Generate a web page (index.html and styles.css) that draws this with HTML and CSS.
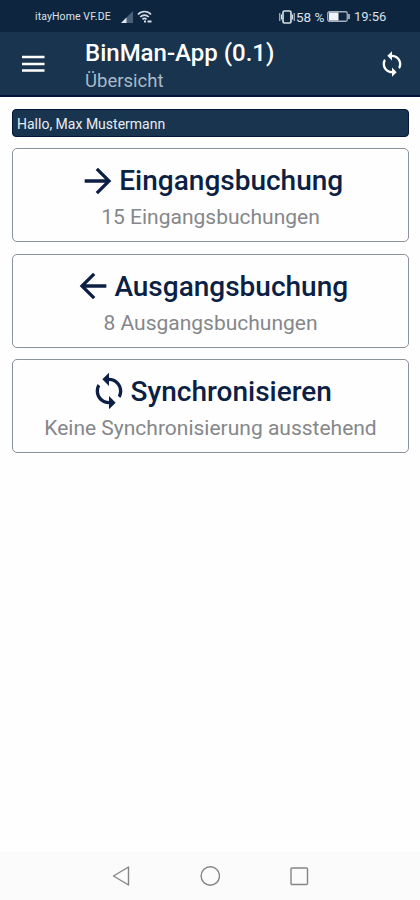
FILE: index.html
```html
<!DOCTYPE html>
<html lang="de">
<head>
    <meta charset="utf-8">
    <meta name="viewport" content="width=device-width">
    <title>BinMan-App</title>
    <link rel="stylesheet" href="styles.css">
</head>
<body>
<div class="statusbar">
    <div class="status-left">
        <span class="carrier">itayHome VF.DE</span>
        <svg class="signal" width="14" height="12" viewBox="0 0 14 12">
            <path d="M13 0v12H1z" fill="#4a6078"/>
            <path d="M6.500 6.500V12H1z" fill="#dfe6ee"/>
        </svg>
        <svg class="wifi" width="15" height="14" viewBox="0 0 15 14" fill="none" stroke="#d5dde6" stroke-width="1.700">
            <path d="M1 4.500C4.500.500 10.500.500 14 4.500M3.300 7c2.400-2.600 6-2.600 8.400 0M5.500 9.300c1.300-1.300 2.700-1.300 4 0"/>
            <path d="M7 11.500h2M10.500 11.500h4" stroke-width="2"/>
        </svg>
    </div>
    <div class="status-right">
        <svg width="16" height="14" viewBox="0 0 16 14" fill="none" stroke="#d5dde6" stroke-width="1.700">
            <rect x="4" y="1" width="8" height="12" rx="1.500"/>
            <path d="M.800 3v8M2.500 4.500v5M15.200 3v8M13.500 4.500v5" stroke-width="1"/>
        </svg>
        <span class="percent">58 %</span>
        <svg class="battery" width="23" height="11" viewBox="0 0 23 11">
            <rect x=".75" y=".75" width="19.500" height="9.500" rx="1.500" fill="none" stroke="#a3b0bd" stroke-width="1.300"/>
            <rect x="2" y="1.500" width="9.500" height="8" fill="#f0f4f8"/>
            <path d="M22 3v5" stroke="#c4cdd6" stroke-width="1.500"/>
        </svg>
        <span class="clock">19:56</span>
    </div>
</div>

<header>
    <svg class="menu" width="24" height="18" viewBox="0 0 24 18">
        <path d="M1 2h22.500M1 9h22.500M1 15.500h22.500" stroke="#fff" stroke-width="2.400"/>
    </svg>
    <div class="titles">
        <h1>BinMan-App (0.1)</h1>
        <p>Übersicht</p>
    </div>
    <svg class="sync" width="28" height="28" viewBox="0 0 24 24">
        <path fill="#fff" d="M12 4V1L8 5l4 4V6c3.310 0 6 2.690 6 6 0 1.010-.25 1.970-.7 2.800l1.460 1.460C19.540 15.030 20 13.570 20 12c0-4.420-3.580-8-8-8zm0 14c-3.310 0-6-2.690-6-6 0-1.010.25-1.970.7-2.800L5.240 7.740C4.460 8.970 4 10.430 4 12c0 4.420 3.580 8 8 8v3l4-4-4-4v3z"/>
    </svg>
</header>

<main>
    <div class="greeting">Hallo, Max Mustermann</div>

    <div class="card">
        <h2>
            <svg class="icon" viewBox="0 0 24 24"><path d="M12 4l-1.410 1.410L16.170 11H4v2h12.170l-5.580 5.590L12 20l8-8z"/></svg>
            <span>Eingangsbuchung</span>
        </h2>
        <p>15 Eingangsbuchungen</p>
    </div>

    <div class="card">
        <h2>
            <svg class="icon" viewBox="0 0 24 24"><path d="M20 11H7.830l5.590-5.590L12 4l-8 8 8 8 1.410-1.410L7.830 13H20z"/></svg>
            <span>Ausgangsbuchung</span>
        </h2>
        <p>8 Ausgangsbuchungen</p>
    </div>

    <div class="card">
        <h2>
            <svg class="icon" viewBox="0 0 24 24"><path d="M12 4V1L8 5l4 4V6c3.310 0 6 2.690 6 6 0 1.010-.25 1.970-.7 2.800l1.460 1.460C19.540 15.030 20 13.570 20 12c0-4.420-3.580-8-8-8zm0 14c-3.310 0-6-2.690-6-6 0-1.010.25-1.970.7-2.800L5.240 7.740C4.460 8.970 4 10.430 4 12c0 4.420 3.580 8 8 8v3l4-4-4-4v3z"/></svg>
            <span>Synchronisieren</span>
        </h2>
        <p>Keine Synchronisierung ausstehend</p>
    </div>
</main>

<nav class="navbar">
    <svg width="20" height="22" viewBox="0 0 20 22"><path d="M17.500 2v18L2.500 11z"/></svg>
    <svg width="20" height="22" viewBox="0 0 20 22"><circle cx="10.300" cy="11" r="9.200"/></svg>
    <svg width="20" height="22" viewBox="0 0 20 22"><rect x="2" y="3" width="16.500" height="16.500" rx="1"/></svg>
</nav>
</body>
</html>
```

FILE: styles.css
```css
* {
  box-sizing: border-box;
}
body {
  font-family: Roboto, Arial, sans-serif;
  margin: 0;
  height: 900px;
  display: flex;
  flex-direction: column;
  background-color: #fefefe;
}
h1, h2, p {
  margin: 0;
  white-space: nowrap;
}
svg {
  flex: none;
}
.statusbar {
  height: 32px;
  padding: 1px 33px 0 35px;
  display: flex;
  justify-content: space-between;
  align-items: center;
  background-color: #0e2540;
  color: #d9e0e8;
  white-space: nowrap;
}
.status-left, .status-right {
  display: flex;
  align-items: center;
}
.carrier {
  font-size: 10.5px;
  font-weight: 400;
  letter-spacing: 0.1px;
  width: 85px;
}
.wifi {
  margin-left: 3px;
}
.percent {
  font-size: 13.5px;
  margin-left: 1px;
  width: 31px;
}
.battery {
  margin-right: 4px;
}
.clock {
  font-size: 13px;
  width: 33px;
}
header {
  height: 65px;
  padding: 0 14px 0 21px;
  display: flex;
  align-items: center;
  background-color: #18344f;
  border-bottom: 2px solid #06103c;
  color: #fff;
}
.titles {
  flex: 1;
  margin-left: 40px;
  padding-top: 7px;
}
header h1 {
  font-size: 24px;
  line-height: 28px;
  font-weight: 500;
}
header p {
  font-size: 18.5px;
  line-height: 28px;
  color: #a9bac9;
}
main {
  flex: 1;
  padding: 12px 11px 0 12px;
}
.greeting {
  height: 28px;
  padding-left: 4px;
  border: 1px solid #06163a;
  border-radius: 4px;
  background-color: #18344f;
  color: #e8edf2;
  font-size: 14px;
  line-height: 28px;
}
.card {
  height: 94px;
  margin-top: 11.3px;
  padding-top: 11px;
  border: 1px solid #8b9299;
  border-radius: 5px;
  text-align: center;
}
.card h2 {
  display: flex;
  justify-content: center;
  align-items: center;
  gap: 1.5px;
  height: 41px;
  font-size: 28px;
  font-weight: 500;
  color: #0c1f45;
}
.icon {
  width: 40px;
  height: 40px;
  fill: #0c1f45;
}
.card p {
  font-size: 21px;
  line-height: 32px;
  color: #85878a;
}
.navbar {
  height: 48px;
  display: flex;
  justify-content: center;
  align-items: center;
  gap: 69px;
  background-color: #fbfbfb;
}
.navbar svg {
  fill: none;
  stroke: #858585;
  stroke-width: 1.400;
  stroke-linejoin: round;
}
```
